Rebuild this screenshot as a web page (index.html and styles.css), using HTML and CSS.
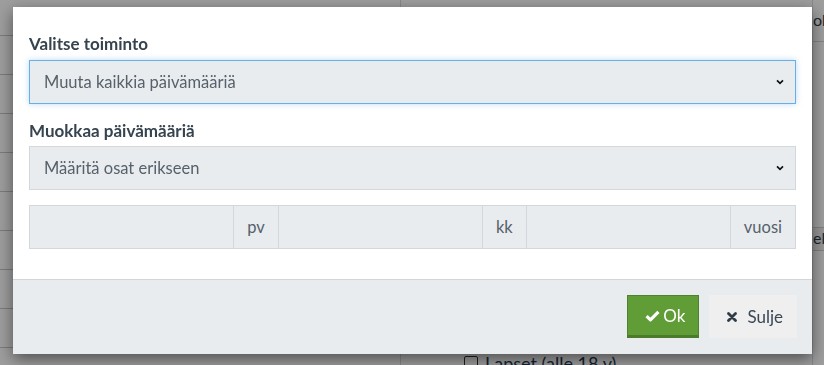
FILE: index.html
```html
<!DOCTYPE html>
<html lang="fi">
  <head>
    <meta charset="UTF-8" />
    <title>Muuta päivämääriä</title>
    <link rel="stylesheet" href="styles.css">
  </head>
  <body>
    <!-- page behind the dialog -->
    <div class="page">
      <div class="side">
        <div class="row"></div><div class="row"></div><div class="row"></div>
        <div class="row"></div><div class="row"></div><div class="row"></div>
        <div class="row"></div><div class="row"></div><div class="row"></div>
      </div>
      <div class="main">
        <div class="main-check"><span class="box"></span>Lapset (alle 18 v)</div>
      </div>
      <div class="edge">
        <div class="edge-head">ok</div>
        <div class="edge-bar">el</div>
      </div>
    </div>

    <div class="overlay"></div>

    <div class="modal">
      <div class="modal-body">
        <div class="label">Valitse toiminto</div>
        <div class="select focus">
          <span>Muuta kaikkia päivämääriä</span>
          <svg class="caret" width="8" height="6" viewBox="0 0 8 6"><path d="M1 1.3 L4 4.3 L7 1.3" fill="none" stroke="#111" stroke-width="1.7"/></svg>
        </div>

        <div class="label second">Muokkaa päivämääriä</div>
        <div class="select">
          <span>Määritä osat erikseen</span>
          <svg class="caret" width="8" height="6" viewBox="0 0 8 6"><path d="M1 1.3 L4 4.3 L7 1.3" fill="none" stroke="#111" stroke-width="1.7"/></svg>
        </div>

        <div class="date-group">
          <div class="field"></div>
          <div class="addon">pv</div>
          <div class="field"></div>
          <div class="addon">kk</div>
          <div class="field"></div>
          <div class="addon">vuosi</div>
        </div>
      </div>

      <div class="modal-footer">
        <button class="btn btn-ok">
          <svg width="15" height="12" viewBox="0 0 15 12"><path d="M1.6 6.2 L5.4 9.8 L13.4 1.8" fill="none" stroke="#fff" stroke-width="3.2" stroke-linejoin="round"/></svg>
          Ok
        </button>
        <button class="btn btn-close">
          <svg width="10" height="10" viewBox="0 0 10 10"><path d="M1.5 1.5 L8.5 8.5 M8.5 1.5 L1.5 8.5" fill="none" stroke="#2f3b47" stroke-width="2.8" stroke-linecap="round"/></svg>
          Sulje
        </button>
      </div>
    </div>
  </body>
</html>
```

FILE: styles.css
```css
body {
  margin: 0;
  font-family: Lato, "Open Sans", sans-serif;
  background-color: #ffffff;
  overflow: hidden;
}

/* background page */
.page {
  display: flex;
  height: 365px;
}

.side {
  width: 400px;
}

.side .row {
  height: 38px;
  border-bottom: 1px solid #c8c8c8;
}

.side .row:first-child {
  height: 35px;
}

.main {
  width: 411px;
  border-left: 1px solid #dddddd;
  border-right: 1px solid #dddddd;
}

.main-check {
  display: flex;
  align-items: center;
  gap: 7px;
  margin-top: 352px;
  padding-left: 63px;
  font-size: 18px;
  line-height: 22px;
  color: #23384f;
}

.main-check .box {
  width: 12px;
  height: 12px;
  border: 1px solid #333;
  border-radius: 2px;
}

.edge {
  flex: 1;
  overflow: hidden;
  font-size: 16px;
  color: #2c3e50;
}

.edge-head {
  height: 42px;
  padding-top: 10px;
  box-sizing: border-box;
  border-bottom: 1px solid #d5d5d5;
  margin-bottom: 185px;
}

.edge-bar {
  height: 22px;
  background-color: #f2f2f2;
  border-top: 1px solid #d0d0d0;
  border-bottom: 1px solid #d0d0d0;
  font-size: 16px;
}

.overlay {
  position: fixed;
  inset: 0;
  background-color: rgba(0, 0, 0, 0.38);
}

/* dialog */
.modal {
  position: absolute;
  top: 7px;
  left: 13px;
  width: 799px;
  background-color: #ffffff;
  box-shadow: 0 5px 15px rgba(0, 0, 0, 0.5);
}

.modal-body {
  padding: 27px 16px 30px 16px;
}

.label {
  font-size: 17px;
  line-height: 20px;
  font-weight: bold;
  color: #36444f;
  margin-bottom: 6px;
}

.label.second {
  margin-top: 17px;
  margin-bottom: 5px;
}

.select {
  height: 44px;
  box-sizing: border-box;
  display: flex;
  align-items: center;
  justify-content: space-between;
  padding: 0 11px 0 14px;
  background-color: #e9ecef;
  border: 1px solid #d3d8dc;
  font-size: 16.5px;
  color: #56616b;
}

.select.focus {
  border-color: #66b0ea;
  box-shadow: 0 0 6px rgba(102, 176, 234, 0.45);
}

.date-group {
  display: flex;
  margin-top: 15px;
  height: 44px;
}

.field {
  flex: 1;
  background-color: #e9ecef;
  border: 1px solid #d3d8dc;
}

.field + .addon,
.addon + .field {
  border-left: none;
}

.addon {
  display: flex;
  align-items: center;
  padding: 0 13px;
  background-color: #e9ecef;
  border: 1px solid #d3d8dc;
  font-size: 16.5px;
  color: #56616b;
}

.modal-footer {
  display: flex;
  justify-content: flex-end;
  gap: 10px;
  padding: 15px 15px 16px;
  background-color: #e9ecef;
  border-top: 1px solid #d2d5d9;
}

.btn {
  height: 43px;
  display: flex;
  align-items: center;
  gap: 3px;
  font-family: Lato, "Open Sans", sans-serif;
  font-size: 17px;
  border: none;
  border-radius: 0;
  cursor: pointer;
}

.btn-ok {
  padding: 0 13px 0 17px;
  background-color: #619d37;
  color: #ffffff;
  border: 1px solid #4f8230;
  border-bottom: 3px solid #4a7a2a;
}

.btn-close {
  padding: 0 14px 0 18px;
  gap: 10px;
  background-color: #efefef;
  color: #3a4756;
}
```
